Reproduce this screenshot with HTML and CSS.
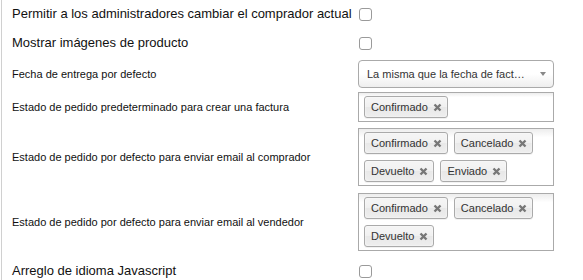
FILE: index.html
```html
<!DOCTYPE html>
<html lang="es">

<head>
    <meta charset="UTF-8">
    <meta name="viewport" content="width=device-width, initial-scale=1.0">
    <title>Ajustes de pedidos</title>
    <link rel="stylesheet" href="styles.css">
</head>

<body>
    <main class="settings">
        <div class="row row-first">
            <label class="name big">Permitir a los administradores cambiar el comprador actual</label>
            <div class="control"><input type="checkbox" class="check"></div>
        </div>
        <div class="row row-second">
            <label class="name big">Mostrar imágenes de producto</label>
            <div class="control"><input type="checkbox" class="check"></div>
        </div>
        <div class="row row-select">
            <label class="name">Fecha de entrega por defecto</label>
            <div class="control">
                <div class="single">
                    <span class="single-text">La misma que la fecha de fact…</span>
                    <span class="arrow"></span>
                </div>
            </div>
        </div>
        <div class="row row-invoice">
            <label class="name">Estado de pedido predeterminado para crear una factura</label>
            <div class="control">
                <ul class="choices">
                    <li class="tag">Confirmado <svg class="close" viewBox="0 0 9 9"><path d="M1.5 1.5L7.5 7.5M7.5 1.5L1.5 7.5"/></svg></li>
                </ul>
            </div>
        </div>
        <div class="row row-buyer">
            <label class="name">Estado de pedido por defecto para enviar email al comprador</label>
            <div class="control">
                <ul class="choices">
                    <li class="tag">Confirmado <svg class="close" viewBox="0 0 9 9"><path d="M1.5 1.5L7.5 7.5M7.5 1.5L1.5 7.5"/></svg></li>
                    <li class="tag">Cancelado <svg class="close" viewBox="0 0 9 9"><path d="M1.5 1.5L7.5 7.5M7.5 1.5L1.5 7.5"/></svg></li>
                    <li class="tag">Devuelto <svg class="close" viewBox="0 0 9 9"><path d="M1.5 1.5L7.5 7.5M7.5 1.5L1.5 7.5"/></svg></li>
                    <li class="tag">Enviado <svg class="close" viewBox="0 0 9 9"><path d="M1.5 1.5L7.5 7.5M7.5 1.5L1.5 7.5"/></svg></li>
                </ul>
            </div>
        </div>
        <div class="row row-seller">
            <label class="name">Estado de pedido por defecto para enviar email al vendedor</label>
            <div class="control">
                <ul class="choices">
                    <li class="tag">Confirmado <svg class="close" viewBox="0 0 9 9"><path d="M1.5 1.5L7.5 7.5M7.5 1.5L1.5 7.5"/></svg></li>
                    <li class="tag">Cancelado <svg class="close" viewBox="0 0 9 9"><path d="M1.5 1.5L7.5 7.5M7.5 1.5L1.5 7.5"/></svg></li>
                    <li class="tag">Devuelto <svg class="close" viewBox="0 0 9 9"><path d="M1.5 1.5L7.5 7.5M7.5 1.5L1.5 7.5"/></svg></li>
                </ul>
            </div>
        </div>
        <div class="row row-last">
            <label class="name big">Arreglo de idioma Javascript</label>
            <div class="control"><input type="checkbox" class="check"></div>
        </div>
    </main>
</body>

</html>
```

FILE: styles.css
```css
body {
    margin: 0;
    background: #fff;
    font-family: "Liberation Sans", Arial, sans-serif;
    color: #111;
}

.settings {
    margin-left: 1px;
    padding-left: 10px;
    border-left: 1px solid #d0d0d0;
    min-height: 280px;
    box-sizing: border-box;
}

.row {
    display: grid;
    grid-template-columns: 346px 196px;
    align-items: center;
    box-sizing: border-box;
}

.row-first {
    height: 28px;
}

.row-second {
    height: 30px;
}

.row-select {
    height: 32px;
}

.row-invoice {
    padding: 2px 0 3px;
}

.row-buyer {
    padding: 3px 0 4px;
}

.row-seller {
    padding: 3px 0;
}

.row-last {
    height: 34px;
}

.name {
    font-size: 11px;
    line-height: 14px;
}

.name.big {
    font-size: 13px;
    line-height: 16px;
    white-space: nowrap;
}

.check {
    appearance: none;
    -webkit-appearance: none;
    display: block;
    width: 13px;
    height: 13px;
    margin: 0 0 0 1px;
    border: 1px solid #9a9a9a;
    border-radius: 3px;
    background: #fff;
    box-sizing: border-box;
}

.single {
    display: flex;
    align-items: center;
    height: 28px;
    box-sizing: border-box;
    border: 1px solid #aaa;
    border-radius: 4px;
    padding: 0 7px 0 8px;
    background: linear-gradient(to top, #eee 0%, #fff 50%);
    font-size: 11px;
    color: #333;
}

.single-text {
    flex: 1;
    white-space: nowrap;
}

.arrow {
    width: 0;
    height: 0;
    border-top: 4px solid #888;
    border-left: 3.5px solid transparent;
    border-right: 3.5px solid transparent;
}

.choices {
    display: flex;
    flex-wrap: wrap;
    gap: 6px 6px;
    margin: 0;
    padding: 3px 0 3px 5px;
    list-style: none;
    border: 1px solid #aaa;
    background: linear-gradient(to bottom, #eee 1%, #fff 15%);
}

.tag {
    display: flex;
    align-items: center;
    gap: 5px;
    height: 22px;
    box-sizing: border-box;
    padding: 0 5px 0 6px;
    border: 1px solid #aaa;
    border-radius: 3px;
    background: linear-gradient(#f4f4f4 20%, #f0f0f0 50%, #e8e8e8 52%, #eee 100%);
    box-shadow: 0 0 2px #fff inset, 0 1px 0 rgba(0, 0, 0, 0.05);
    font-size: 11px;
    line-height: 14px;
    color: #333;
}

.close {
    width: 9px;
    height: 9px;
    stroke: #777;
    stroke-width: 2.4;
    fill: none;
}
```
